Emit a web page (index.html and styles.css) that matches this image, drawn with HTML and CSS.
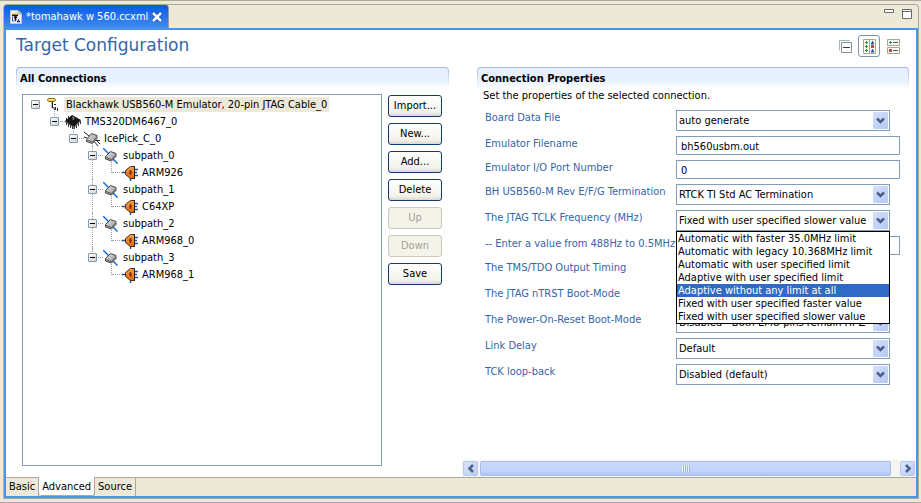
FILE: index.html
```
<!DOCTYPE html>
<html lang="en">
<head>
<meta charset="utf-8">
<title>Target Configuration</title>
<link rel="stylesheet" href="styles.css">
</head>
<body>
<svg class="defs" aria-hidden="true">
  <defs>
    <linearGradient id="metal" x1="0" y1="0" x2="1" y2="1"><stop offset="0" stop-color="#d8d8d8"/><stop offset="1" stop-color="#a0a0a0"/></linearGradient>
    <linearGradient id="copper" x1="0" y1="0" x2="0" y2="1"><stop offset="0" stop-color="#f7a04a"/><stop offset="1" stop-color="#d96a10"/></linearGradient>
    <symbol id="i-cable" viewBox="0 0 16 16">
      <path d="M2.500 1.500h6l1 1v1l-1 1h-6l-1-1v-1z" fill="#ecc63c" stroke="#8a6a14"/>
      <path d="M3 2.500h4" stroke="#fff3b0"/>
      <path d="M6.500 5v6h3M8 7.500h2M9.500 10v3M11.500 11v3M8 12.500h2" fill="none" stroke="#222"/>
      <path d="M5.500 5v6" stroke="#bbb"/>
    </symbol>
    <symbol id="i-chip" viewBox="0 0 16 16">
      <path d="M1.500 8v3M3.500 9v4M5.500 10v4M7.500 12v3M9.500 12v3M11.500 11v3M13.500 9v3M15.500 7v3M3.500 2v3M1.500 4v2" stroke="#333"/>
      <path d="M0 7l7-6 9 5-7 7z" fill="#151515"/>
      <path d="M0 7l9 6 7-7v1l-7 7-9-6z" fill="#555"/>
      <path d="M7 3l2 1-1 2" fill="none" stroke="#aaa"/>
    </symbol>
    <symbol id="i-pick" viewBox="0 0 16 16">
      <path d="M0 1l5 4M9 9l5 6M11 8l5 5M11 9.500h5M0 6l3 1" stroke="#222" fill="none"/>
      <path d="M2.500 8.500l5-6 5.500 2v3l-4.500 5-6-2z" fill="url(#metal)" stroke="#444"/>
      <path d="M3 9l5.500 2 4-5" fill="none" stroke="#666"/>
    </symbol>
    <symbol id="i-path" viewBox="0 0 16 16">
      <path d="M0 0l6 6M9 10l5.500 5.500" stroke="#1671d8" stroke-width="1.500"/>
      <path d="M2.500 8.500l5-5 5.500 2v3l-4.500 4.500-6-2z" fill="url(#metal)" stroke="#444"/>
      <path d="M3 9.500l5.500 2 4-4.500" fill="none" stroke="#555"/>
    </symbol>
    <symbol id="i-core" viewBox="0 0 16 16">
      <path d="M0 7.500h4M12 4.500h4M12 7.500h3M12 10.500h4M8.500 12v4" stroke="#1d50b8" stroke-width="1.500"/>
      <path d="M3.500 5.500l5-4h4v12h-4l-5-4z" fill="url(#copper)" stroke="#5a2a08"/>
      <path d="M8.500 5v5M7 7.500h3" stroke="#8a2f08" stroke-width="1.500"/>
      <path d="M12.500 1v13" stroke="#222"/>
    </symbol>
    <symbol id="i-chevron" viewBox="0 0 15 17">
      <path d="M4 6.500l3.500 3.500L11 6.500" fill="none" stroke="#4d6185" stroke-width="2.500"/>
    </symbol>
  </defs>
</svg>

<main class="frame">
  <header class="tabstrip">
    <div class="file-tab">
      <svg class="file-icon" viewBox="0 0 12 14" aria-hidden="true">
        <path d="M.5.5h7.500l3.500 3.500v9.500H.5z" fill="#f5f5ee" stroke="#c8c8c0"/>
        <path d="M8 .5v3.500h3.500" fill="#ddd" stroke="#aaa"/>
        <path d="M2 3.500h5v2H2z" fill="#d6b43c"/>
        <path d="M2 5.500h6M5.500 5v6M4 7.500h3M7 11.500h3" stroke="#111" stroke-width="1.500"/>
        <path d="M2.500 7v4h2M8.500 9v3" stroke="#2f62c0" fill="none"/>
      </svg>
      <span>*tomahawk w 560.ccxml</span>
      <button class="bare" type="button" aria-label="Close">
        <svg width="10" height="10" viewBox="0 0 10 10"><path d="M1 1l8 8M9 1l-8 8" stroke="#1c3d87" stroke-width="4"/><path d="M1 1l8 8M9 1l-8 8" stroke="#fff" stroke-width="2.500"/></svg>
      </button>
    </div>
    <div class="window-buttons">
      <button class="bare" type="button" aria-label="Minimize"><svg width="10" height="10" viewBox="0 0 10 10"><path d="M.5.500h9v3h-9z" fill="#fff" stroke="#6b6a60"/></svg></button>
      <button class="bare" type="button" aria-label="Maximize"><svg width="10" height="10" viewBox="0 0 10 10"><path d="M.5.500h9v9h-9zM0 2.500h10" fill="#fff" stroke="#6b6a60"/></svg></button>
    </div>
  </header>

  <div class="editor">
    <div class="form-head">
      <h1>Target Configuration</h1>
      <div class="toolbar">
        <button class="tool" type="button" aria-label="Collapse all"><svg width="13" height="13" viewBox="0 0 13 13"><path d="M.5 10.500V.5h10" fill="none" stroke="#8fc3b0"/><path d="M2.500 2.500h10v10h-10z" fill="#fff" stroke="#8c8c96"/><path d="M4 7.500h7" stroke="#1c3f77"/></svg></button>
        <button class="tool tool-on" type="button" aria-label="Horizontal layout"><svg width="13" height="15" viewBox="0 0 13 15"><path d="M.5.500h6v14h-6zM6.500.5h6v14h-6z" fill="#fbfbf4" stroke="#a7a78f"/><path d="M2 3.500h3M2 7.500h3M2 11.500h3M3.500 2v3M3.500 6v3M3.500 10v3" stroke="#23a046"/><path d="M8 4.500h3M9 3h1M8 12.500h3M9 11h1" stroke="#2a50b4" stroke-width="2"/><path d="M8 7.500h3" stroke="#c24848" stroke-width="3"/></svg></button>
        <button class="tool" type="button" aria-label="Vertical layout"><svg width="13" height="15" viewBox="0 0 13 15"><path d="M.5.500h12v6h-12zM.5 8.500h12v6H.5z" fill="#fbfbf4" stroke="#a7a78f"/><path d="M2 3.500h3M3.500 2v3" stroke="#23a046"/><path d="M2 11.500h3" stroke="#c24848" stroke-width="3"/><path d="M6 3.500h5M6 11.500h5" stroke="#3a56a0"/></svg></button>
      </div>
    </div>

    <div class="panes">
      <section class="pane pane-left">
        <h2 class="section-title">All Connections</h2>
        <div class="connections">
          <ul class="tree">
            <li>
              <div class="node"><i class="twisty"></i><svg class="icon"><use href="#i-cable"/></svg><span class="selected">Blackhawk USB560-M Emulator, 20-pin JTAG Cable_0</span></div>
              <ul>
                <li>
                  <div class="node"><i class="twisty"></i><svg class="icon"><use href="#i-chip"/></svg><span>TMS320DM6467_0</span></div>
                  <ul>
                    <li>
                      <div class="node"><i class="twisty"></i><svg class="icon"><use href="#i-pick"/></svg><span>IcePick_C_0</span></div>
                      <ul>
                        <li>
                          <div class="node"><i class="twisty"></i><svg class="icon"><use href="#i-path"/></svg><span>subpath_0</span></div>
                          <ul><li><div class="node leaf"><svg class="icon"><use href="#i-core"/></svg><span>ARM926</span></div></li></ul>
                        </li>
                        <li>
                          <div class="node"><i class="twisty"></i><svg class="icon"><use href="#i-path"/></svg><span>subpath_1</span></div>
                          <ul><li><div class="node leaf"><svg class="icon"><use href="#i-core"/></svg><span>C64XP</span></div></li></ul>
                        </li>
                        <li>
                          <div class="node"><i class="twisty"></i><svg class="icon"><use href="#i-path"/></svg><span>subpath_2</span></div>
                          <ul><li><div class="node leaf"><svg class="icon"><use href="#i-core"/></svg><span>ARM968_0</span></div></li></ul>
                        </li>
                        <li>
                          <div class="node"><i class="twisty"></i><svg class="icon"><use href="#i-path"/></svg><span>subpath_3</span></div>
                          <ul><li><div class="node leaf"><svg class="icon"><use href="#i-core"/></svg><span>ARM968_1</span></div></li></ul>
                        </li>
                      </ul>
                    </li>
                  </ul>
                </li>
              </ul>
            </li>
          </ul>
          <div class="actions">
            <button class="btn" type="button">Import...</button>
            <button class="btn" type="button">New...</button>
            <button class="btn" type="button">Add...</button>
            <button class="btn" type="button">Delete</button>
            <button class="btn" type="button" disabled>Up</button>
            <button class="btn" type="button" disabled>Down</button>
            <button class="btn" type="button">Save</button>
          </div>
        </div>
      </section>

      <section class="pane pane-right">
        <div class="props">
          <h2 class="section-title">Connection Properties</h2>
          <p class="hint">Set the properties of the selected connection.</p>
          <form class="fields">
            <label for="board">Board Data File</label>
            <div class="combo"><select id="board"><option>auto generate</option></select><svg class="arrow"><use href="#i-chevron"/></svg></div>
            <label for="file">Emulator Filename</label>
            <input id="file" type="text" value="bh560usbm.out">
            <label for="port">Emulator I/O Port Number</label>
            <input id="port" type="text" value="0">
            <label for="term">BH USB560-M Rev E/F/G Termination</label>
            <div class="combo"><select id="term"><option>RTCK TI Std AC Termination</option></select><svg class="arrow"><use href="#i-chevron"/></svg></div>
            <label for="tclk">The JTAG TCLK Frequency (MHz)</label>
            <div class="combo">
              <select id="tclk"><option>Fixed with user specified slower value</option></select><svg class="arrow"><use href="#i-chevron"/></svg>
              <ul class="menu" role="listbox" aria-label="The JTAG TCLK Frequency (MHz)">
                <li role="option">Automatic with faster 35.0MHz limit</li>
                <li role="option">Automatic with legacy 10.368MHz limit</li>
                <li role="option">Automatic with user specified limit</li>
                <li role="option">Adaptive with user specified limit</li>
                <li role="option" class="active" aria-selected="true">Adaptive without any limit at all</li>
                <li role="option">Fixed with user specified faster value</li>
                <li role="option">Fixed with user specified slower value</li>
              </ul>
            </div>
            <label for="freq">-- Enter a value from 488Hz to 0.5MHz</label>
            <input id="freq" type="text">
            <label for="tms">The TMS/TDO Output Timing</label>
            <div class="combo"><select id="tms"></select><svg class="arrow"><use href="#i-chevron"/></svg></div>
            <label for="ntrst">The JTAG nTRST Boot-Mode</label>
            <div class="combo"><select id="ntrst"></select><svg class="arrow"><use href="#i-chevron"/></svg></div>
            <label for="por">The Power-On-Reset Boot-Mode</label>
            <div class="combo"><select id="por"><option>Disabled - Both EMU pins remain HI-Z</option></select><svg class="arrow"><use href="#i-chevron"/></svg></div>
            <label for="delay">Link Delay</label>
            <div class="combo"><select id="delay"><option>Default</option></select><svg class="arrow"><use href="#i-chevron"/></svg></div>
            <label for="tck">TCK loop-back</label>
            <div class="combo"><select id="tck"><option>Disabled (default)</option></select><svg class="arrow"><use href="#i-chevron"/></svg></div>
          </form>
        </div>
        <div class="scrollbar">
          <button class="scroll-btn" type="button" aria-label="Scroll left"><svg width="8" height="9" viewBox="0 0 8 9"><path d="M6 1L2.500 4.500 6 8" fill="none" stroke="#4d6185" stroke-width="2.500"/></svg></button>
          <div class="thumb"><i class="grip"></i></div>
          <button class="scroll-btn" type="button" aria-label="Scroll right"><svg width="8" height="9" viewBox="0 0 8 9"><path d="M2 1l3.500 3.500L2 8" fill="none" stroke="#4d6185" stroke-width="2.500"/></svg></button>
        </div>
      </section>
    </div>

    <nav class="page-tabs">
      <a href="#basic">Basic</a>
      <a href="#advanced" class="current">Advanced</a>
      <a href="#source">Source</a>
    </nav>
  </div>
</main>
</body>
</html>
```
FILE: styles.css
```
* { box-sizing: border-box; }

body {
  margin: 0;
  min-height: 100vh;
  display: flex;
  flex-direction: column;
  padding: 3px 2px 3px 3px;
  border-top: 1px solid #aca899;
  border-bottom: 1px solid #aca899;
  background: #ece9d8;
  color: #000;
  font: 11px/14px "DejaVu Sans Condensed", "DejaVu Sans", sans-serif;
}

ul { list-style: none; margin: 0; padding: 0; }
h1, h2, p { margin: 0; font-weight: normal; }
svg { display: block; }
.defs { position: absolute; width: 0; height: 0; }

.bare {
  padding: 0;
  border: 0;
  background: none;
}

.frame {
  flex: 1;
  display: flex;
  flex-direction: column;
  border: 1px solid #aca899;
  border-left-color: #b5b3ac;
  border-radius: 4px 4px 0 0;
}

.tabstrip {
  display: flex;
  justify-content: space-between;
  height: 23px;
}

.file-tab {
  display: flex;
  align-items: center;
  gap: 4px;
  padding: 0 6px;
  border-right: 1px solid #8f9bb0;
  border-radius: 3px 3px 0 0;
  background: linear-gradient(#0a5ae4, #3f8df0);
  color: #fff;
}
.file-icon { width: 12px; height: 14px; }

.window-buttons {
  display: flex;
  gap: 8px;
  padding: 4px 6px 0 0;
}
.window-buttons .bare { height: 10px; }

.editor {
  flex: 1;
  display: flex;
  flex-direction: column;
  border: 2px solid #4a94ec;
  background: #fff;
}

.form-head {
  display: flex;
  justify-content: space-between;
  height: 37px;
  padding: 5px 12px 0 10px;
}
h1 {
  color: #3465a8;
  font: 17px/20px "DejaVu Sans", sans-serif;
}

.toolbar { display: flex; gap: 2px; }
.tool {
  display: grid;
  place-items: center;
  width: 22px;
  height: 22px;
  padding: 0;
  border: 1px solid transparent;
  border-radius: 3px;
  background: none;
}
.tool-on { border-color: #7d94ad; }

.panes {
  flex: 1;
  display: grid;
  grid-template-columns: minmax(0, 1fr) minmax(0, 1fr);
}
.pane { display: flex; flex-direction: column; }
.pane-left { padding: 0 12px 11px 10px; }

.section-title {
  height: 22px;
  padding: 4px 3px 0;
  border: 1px solid transparent;
  border-bottom: 0;
  border-radius: 4px 4px 0 0;
  background:
    linear-gradient(#e6effd, #e8f1fe 60%, #fff) padding-box,
    linear-gradient(#a3b8dc, #fff) border-box;
  font-size: 11px;
  font-weight: bold;
}

.connections {
  flex: 1;
  display: flex;
  gap: 6px;
  padding: 5px 7px 0 6px;
}

.tree {
  flex: 1;
  padding: 1px 8px;
  border: 1px solid #7f9db9;
}
.tree ul { margin-left: 19px; }
.tree li { position: relative; }
.tree ul > li::before {
  content: "";
  position: absolute;
  left: 4px;
  top: -2px;
  bottom: 0;
  border-left: 1px dotted #a5a294;
}
.tree ul > li:last-child::before { bottom: auto; height: 11px; }
.tree ul > li::after {
  content: "";
  position: absolute;
  left: 5px;
  top: 8px;
  width: 10px;
  border-top: 1px dotted #a5a294;
}
.node {
  display: flex;
  align-items: center;
  height: 17px;
  white-space: nowrap;
}
.node span { padding: 0 2px; line-height: 15px; }
.node .selected { background: #ece9d8; }
.icon { width: 16px; height: 16px; margin: 0 2px 0 6px; flex: none; position: relative; z-index: 1; }
.leaf .icon { margin-left: 15px; }
.twisty {
  position: relative;
  z-index: 1;
  width: 9px;
  height: 9px;
  flex: none;
  border: 1px solid #7b9ab8;
  border-radius: 1px;
  background: linear-gradient(#000, #000) center / 5px 1px no-repeat, linear-gradient(135deg, #fff, #d8d3c6);
}

.actions {
  display: flex;
  flex-direction: column;
  gap: 6px;
  padding-top: 1px;
}
.btn {
  width: 54px;
  height: 22px;
  padding: 0;
  border: 1px solid #123c6e;
  border-radius: 3px;
  background: linear-gradient(#fff, #f3f2ea 80%, #dcd7ca);
  color: #000;
  font: inherit;
}
.btn:disabled {
  border-color: #cac8bb;
  background: #f4f3ea;
  color: #a5a295;
}

.props { flex: 1; padding: 0 7px 0 16px; }
.hint { padding: 0 6px; }

.fields {
  display: grid;
  grid-template-columns: 186px minmax(0, 1fr);
  gap: 5px;
  padding: 7px 9px 0 8px;
}
.fields label {
  height: 16px;
  color: #3465a8;
  line-height: 16px;
  white-space: nowrap;
}
.fields input, .fields select {
  width: 100%;
  border: 1px solid #7f9db9;
  border-radius: 0;
  background: #fff;
  color: #000;
  font: inherit;
}
.fields input { height: 19px; padding: 1px 4px 0; }
.fields select { display: block; height: 21px; padding: 1px 2px 0; appearance: none; }
.combo { position: relative; margin-right: 10px; }
.arrow {
  position: absolute;
  right: 2px;
  top: 2px;
  width: 15px;
  height: 17px;
  border-radius: 1px;
  background: linear-gradient(135deg, #d5e0fc, #b5c8f4);
  pointer-events: none;
}

.menu {
  position: absolute;
  z-index: 5;
  top: 100%;
  left: 0;
  right: 0;
  border: 1px solid #000;
  background: #fff;
  line-height: 13px;
  white-space: nowrap;
}
.menu li { padding: 0 1px; }
.menu .active { background: #316ac5; color: #fff; }

.scrollbar {
  display: flex;
  gap: 2px;
  height: 17px;
  margin-left: 1px;
  padding: 1px;
  background: #f5f5f1;
}
.scroll-btn {
  display: grid;
  place-items: center;
  width: 15px;
  padding: 0;
  border: 1px solid #b8c9f0;
  border-radius: 2px;
  background: linear-gradient(135deg, #dbe5fd, #b9cbf8);
}
.thumb {
  flex: 1;
  display: grid;
  place-items: center;
  margin-right: 7px;
  border: 1px solid #a9bce8;
  border-radius: 2px;
  background: linear-gradient(#cbd9fd, #c1d2fc 70%, #b0c4f2);
}
.grip {
  width: 8px;
  height: 6px;
  background: repeating-linear-gradient(90deg, #f0f5ff 0 1px, #98b0e8 1px 2px);
}

.page-tabs {
  display: flex;
  height: 19px;
  border-top: 1px solid #aca899;
  background: #ece9d8;
}
.page-tabs a {
  padding: 2px 3px 0;
  border-right: 1px solid #aca899;
  color: #000;
  text-decoration: none;
}
.page-tabs .current {
  margin-top: -1px;
  padding-top: 3px;
  border-bottom: 1px solid #aca899;
  border-radius: 0 0 3px 3px;
  background: #fff;
}
```
